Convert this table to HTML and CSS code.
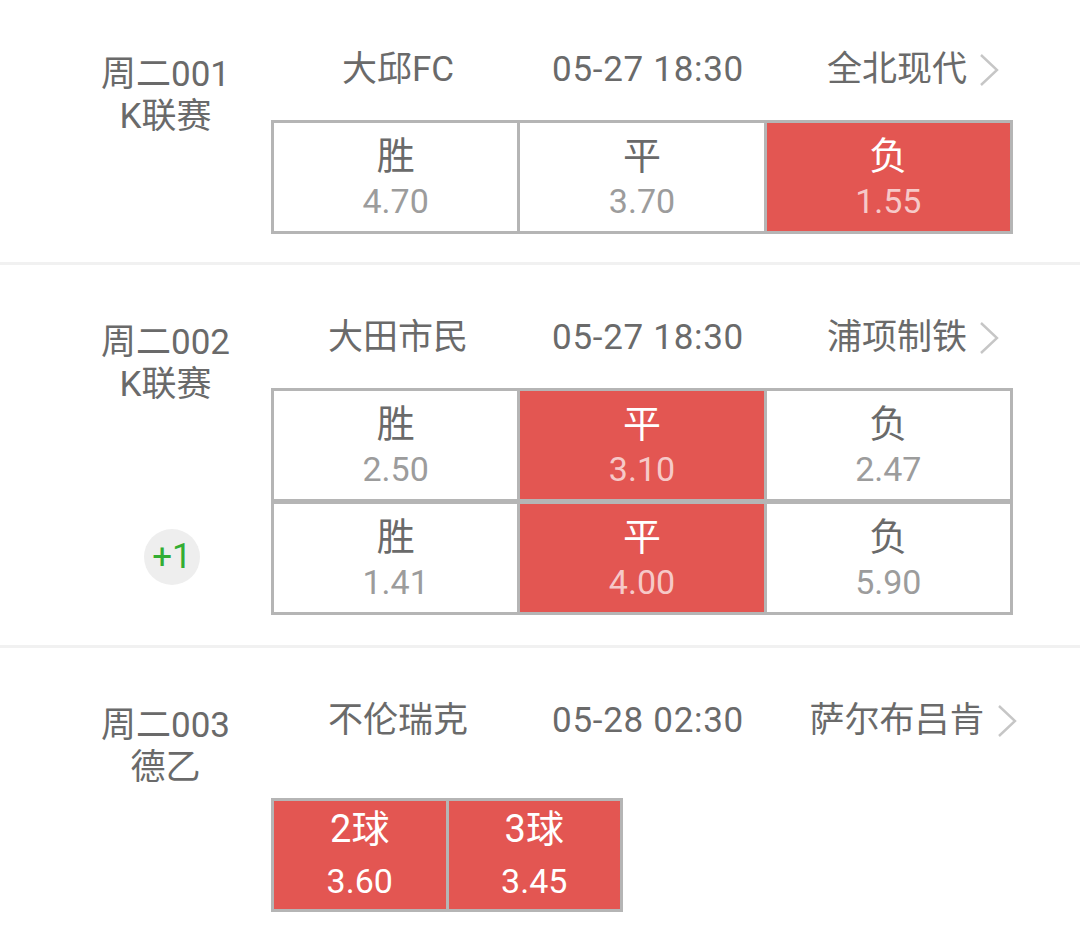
FILE: index.html
```html
<!DOCTYPE html>
<html lang="zh-CN">
<head>
<meta charset="utf-8">
<title>赛事列表</title>
<link rel="stylesheet" href="styles.css">
</head>
<body>
<div class="list">
  <section class="match first">
    <div class="league">
      <div class="league-line">周二001</div>
      <div class="league-line">K联赛</div>
    </div>
    <div class="main">
      <div class="teams">
        <span class="home">大邱FC</span>
        <span class="time">05-27 18:30</span>
        <span class="away"><span class="away-name">全北现代<svg class="chev" viewBox="0 0 20 34" width="20" height="34"><polyline points="2,2 18,17 2,32" fill="none" stroke="#c6c6c6" stroke-width="2.4"/></svg></span></span>
      </div>
      <div class="odds">
        <div class="odds-row">
          <div class="cell"><span class="lbl">胜</span><span class="val">4.70</span></div>
          <div class="cell"><span class="lbl">平</span><span class="val">3.70</span></div>
          <div class="cell on"><span class="lbl">负</span><span class="val">1.55</span></div>
        </div>
      </div>
    </div>
  </section>
  <div class="sep"></div>
  <section class="match">
    <div class="league">
      <div class="league-line">周二002</div>
      <div class="league-line">K联赛</div>
      <div class="badge">+1</div>
    </div>
    <div class="main">
      <div class="teams">
        <span class="home">大田市民</span>
        <span class="time">05-27 18:30</span>
        <span class="away"><span class="away-name">浦项制铁<svg class="chev" viewBox="0 0 20 34" width="20" height="34"><polyline points="2,2 18,17 2,32" fill="none" stroke="#c6c6c6" stroke-width="2.4"/></svg></span></span>
      </div>
      <div class="odds">
        <div class="odds-row">
          <div class="cell"><span class="lbl">胜</span><span class="val">2.50</span></div>
          <div class="cell on"><span class="lbl">平</span><span class="val">3.10</span></div>
          <div class="cell"><span class="lbl">负</span><span class="val">2.47</span></div>
        </div>
        <div class="odds-row">
          <div class="cell"><span class="lbl">胜</span><span class="val">1.41</span></div>
          <div class="cell on"><span class="lbl">平</span><span class="val">4.00</span></div>
          <div class="cell"><span class="lbl">负</span><span class="val">5.90</span></div>
        </div>
      </div>
    </div>
  </section>
  <div class="sep"></div>
  <section class="match">
    <div class="league">
      <div class="league-line">周二003</div>
      <div class="league-line">德乙</div>
    </div>
    <div class="main">
      <div class="teams">
        <span class="home">不伦瑞克</span>
        <span class="time">05-28 02:30</span>
        <span class="away"><span class="away-name">萨尔布吕肯<svg class="chev" viewBox="0 0 20 34" width="20" height="34"><polyline points="2,2 18,17 2,32" fill="none" stroke="#c6c6c6" stroke-width="2.4"/></svg></span></span>
      </div>
      <div class="odds goals">
        <div class="odds-row">
          <div class="cell on"><span class="lbl">2球</span><span class="val">3.60</span></div>
          <div class="cell on"><span class="lbl">3球</span><span class="val">3.45</span></div>
        </div>
      </div>
    </div>
  </section>
</div>
</body>
</html>
```

FILE: styles.css
```css
html, body {
  margin: 0;
  padding: 0;
  background: #ffffff;
}

body {
  font-family: Roboto, "Noto Sans CJK SC", "Noto Sans", sans-serif;
  color: #6a6a6a;
  width: 1080px;
  overflow: hidden;
}

.match {
  display: flex;
  padding: 47px 0 30px;
}

.match.first {
  padding-top: 44px;
  padding-bottom: 28px;
}

.sep {
  height: 3px;
  background: #f1f1f1;
}

.league {
  width: 211px;
  padding: 10px 0 0 60px;
  display: flex;
  flex-direction: column;
  align-items: center;
  flex-shrink: 0;
}

.league-line {
  font-size: 35px;
  line-height: 42px;
  white-space: nowrap;
}

.badge {
  align-self: flex-start;
  margin: 123px 0 0 84px;
  width: 56px;
  height: 56px;
  border-radius: 50%;
  background: #eeeeee;
  color: #33ad33;
  font-size: 35px;
  line-height: 56px;
  text-align: center;
}

.main {
  display: flex;
  flex-direction: column;
}

.teams {
  display: grid;
  grid-template-columns: 254px 246px 252px;
  height: 48px;
  font-size: 35px;
  line-height: 52px;
  white-space: nowrap;
}

.teams > span {
  text-align: center;
}

.time {
  letter-spacing: 0.7px;
}

.away-name {
  position: relative;
}

.chev {
  position: absolute;
  left: calc(100% + 12px);
  top: 4px;
}

.odds {
  margin-top: 28px;
  width: 742px;
}

.odds.goals {
  margin-top: 55px;
  width: 352px;
}

.odds-row {
  display: flex;
  border: 3px solid #b5b5b5;
  height: 108px;
}

.odds-row + .odds-row {
  margin-top: -1px;
}

.cell {
  flex: 1;
  display: flex;
  flex-direction: column;
  align-items: center;
  padding-top: 12px;
  box-sizing: border-box;
  background: #ffffff;
}

.cell + .cell {
  border-left: 3px solid #b5b5b5;
}

.lbl {
  font-size: 38px;
  line-height: 42px;
  color: #6a6a6a;
}

.val {
  font-size: 34px;
  line-height: 44px;
  margin-top: 2px;
  color: #9c9c9c;
}

.cell.on {
  background: #e35652;
}

.cell.on .lbl {
  color: #ffffff;
}

.cell.on .val {
  color: #f6c9c8;
}

.goals .cell {
  padding-top: 7px;
}

.goals .lbl {
  margin-bottom: 11px;
}

.goals .val {
  line-height: 40px;
  margin-top: 0;
}

.goals .cell.on .val {
  color: #ffffff;
}
```
